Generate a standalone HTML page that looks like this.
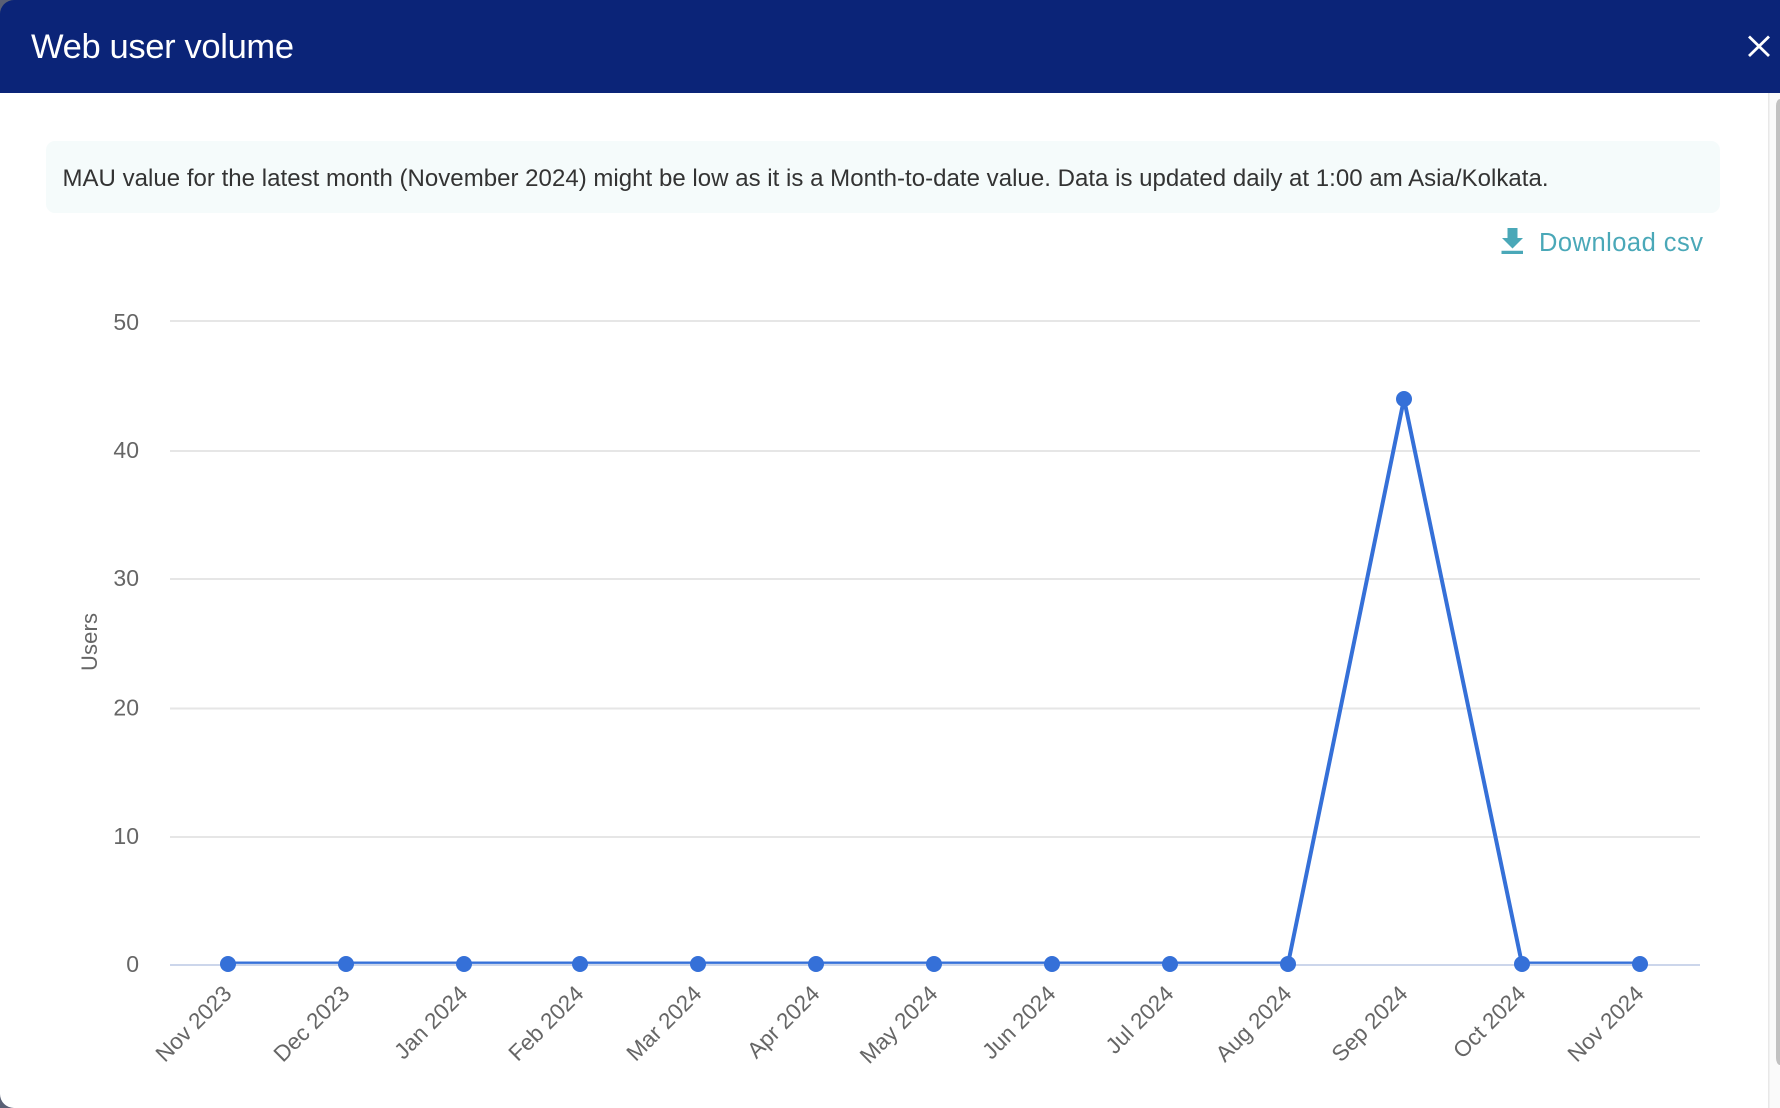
<!DOCTYPE html>
<html><head><meta charset="utf-8"><title>Web user volume</title>
<style>
html,body{margin:0;padding:0;width:1780px;height:1108px;overflow:hidden;background:#fff}
svg{display:block}
text{font-family:"Liberation Sans",sans-serif}
.y{font-size:23px;fill:#666;text-anchor:end}
.x{font-size:22.500px;fill:#666;text-anchor:end}
.g{stroke:#e6e6e6;stroke-width:2}
</style></head><body>
<svg width="1780" height="1108" viewBox="0 0 1780 1108" xmlns="http://www.w3.org/2000/svg">
<rect width="1780" height="1108" fill="#5a6075"/>
<path d="M0 93H1780V1108H14A14 14 0 0 1 0 1094Z" fill="#fff"/>
<path d="M14 0H1780V93H0V14A14 14 0 0 1 14 0Z" fill="#0b2478"/>
<text x="31" y="58" font-size="34.500" fill="#fff" textLength="263" lengthAdjust="spacing">Web user volume</text>
<path d="M1749 36.500L1769 56M1769 36.500L1749 56" stroke="#fff" stroke-width="2.800" fill="none"/>
<rect x="1768" y="93" width="12" height="1015" fill="#fafafa"/>
<rect x="1768" y="93" width="1.500" height="1015" fill="#e8e8e8"/>
<path d="M1780 99V1065A4 7 0 0 1 1776 1058V106A4 7 0 0 1 1780 99Z" fill="#c1c1c1"/>
<rect x="46" y="141" width="1674" height="72" rx="9" fill="#f5fbfb"/>
<text x="62.500" y="186" font-size="24" fill="#333" textLength="1486" lengthAdjust="spacing">MAU value for the latest month (November 2024) might be low as it is a Month-to-date value. Data is updated daily at 1:00 am Asia/Kolkata.</text>
<path d="M1507.500 228H1517.500V238H1523L1512.500 248.500L1502 238H1507.500ZM1501.500 250.700H1523V254H1501.500Z" fill="#4aa8b8"/>
<text x="1539" y="251" font-size="25.500" fill="#4aa8b8" textLength="164" lengthAdjust="spacing">Download csv</text>
<line class="g" x1="170" x2="1700" y1="321" y2="321"/>
<line class="g" x1="170" x2="1700" y1="451" y2="451"/>
<line class="g" x1="170" x2="1700" y1="579" y2="579"/>
<line class="g" x1="170" x2="1700" y1="708.500" y2="708.500"/>
<line class="g" x1="170" x2="1700" y1="837" y2="837"/>
<line x1="170" x2="1700" y1="965" y2="965" stroke="#ccd6eb" stroke-width="2"/>
<text class="y" x="139" y="330">50</text>
<text class="y" x="139" y="458">40</text>
<text class="y" x="139" y="586">30</text>
<text class="y" x="139" y="715.500">20</text>
<text class="y" x="139" y="844">10</text>
<text class="y" x="139" y="972">0</text>
<text font-size="22" fill="#666" text-anchor="middle" transform="translate(97 642) rotate(-90)" textLength="58" lengthAdjust="spacing">Users</text>
<polyline points="228,962.700 346,962.700 464,962.700 580,962.700 698,962.700 816,962.700 934,962.700 1052,962.700 1170,962.700 1288,962.700" fill="none" stroke="#3570d8" stroke-width="2.400"/>
<polyline points="1522,962.700 1640,962.700" fill="none" stroke="#3570d8" stroke-width="2.400"/>
<path d="M1288 964L1404 399L1522 964" fill="none" stroke="#3570d8" stroke-width="4"/>
<g fill="#3570d8">
<circle cx="228" cy="964" r="8"/><circle cx="346" cy="964" r="8"/><circle cx="464" cy="964" r="8"/><circle cx="580" cy="964" r="8"/><circle cx="698" cy="964" r="8"/><circle cx="816" cy="964" r="8"/><circle cx="934" cy="964" r="8"/><circle cx="1052" cy="964" r="8"/><circle cx="1170" cy="964" r="8"/><circle cx="1288" cy="964" r="8"/><circle cx="1404" cy="399" r="8"/><circle cx="1522" cy="964" r="8"/><circle cx="1640" cy="964" r="8"/>
</g>
<text class="x" transform="translate(233 995) rotate(-45)">Nov 2023</text>
<text class="x" transform="translate(351 995) rotate(-45)">Dec 2023</text>
<text class="x" transform="translate(469 995) rotate(-45)">Jan 2024</text>
<text class="x" transform="translate(585 995) rotate(-45)">Feb 2024</text>
<text class="x" transform="translate(703 995) rotate(-45)">Mar 2024</text>
<text class="x" transform="translate(821 995) rotate(-45)">Apr 2024</text>
<text class="x" transform="translate(939 995) rotate(-45)">May 2024</text>
<text class="x" transform="translate(1057 995) rotate(-45)">Jun 2024</text>
<text class="x" transform="translate(1175 995) rotate(-45)">Jul 2024</text>
<text class="x" transform="translate(1293 995) rotate(-45)">Aug 2024</text>
<text class="x" transform="translate(1409 995) rotate(-45)">Sep 2024</text>
<text class="x" transform="translate(1527 995) rotate(-45)">Oct 2024</text>
<text class="x" transform="translate(1645 995) rotate(-45)">Nov 2024</text>
</svg>
</body></html>
